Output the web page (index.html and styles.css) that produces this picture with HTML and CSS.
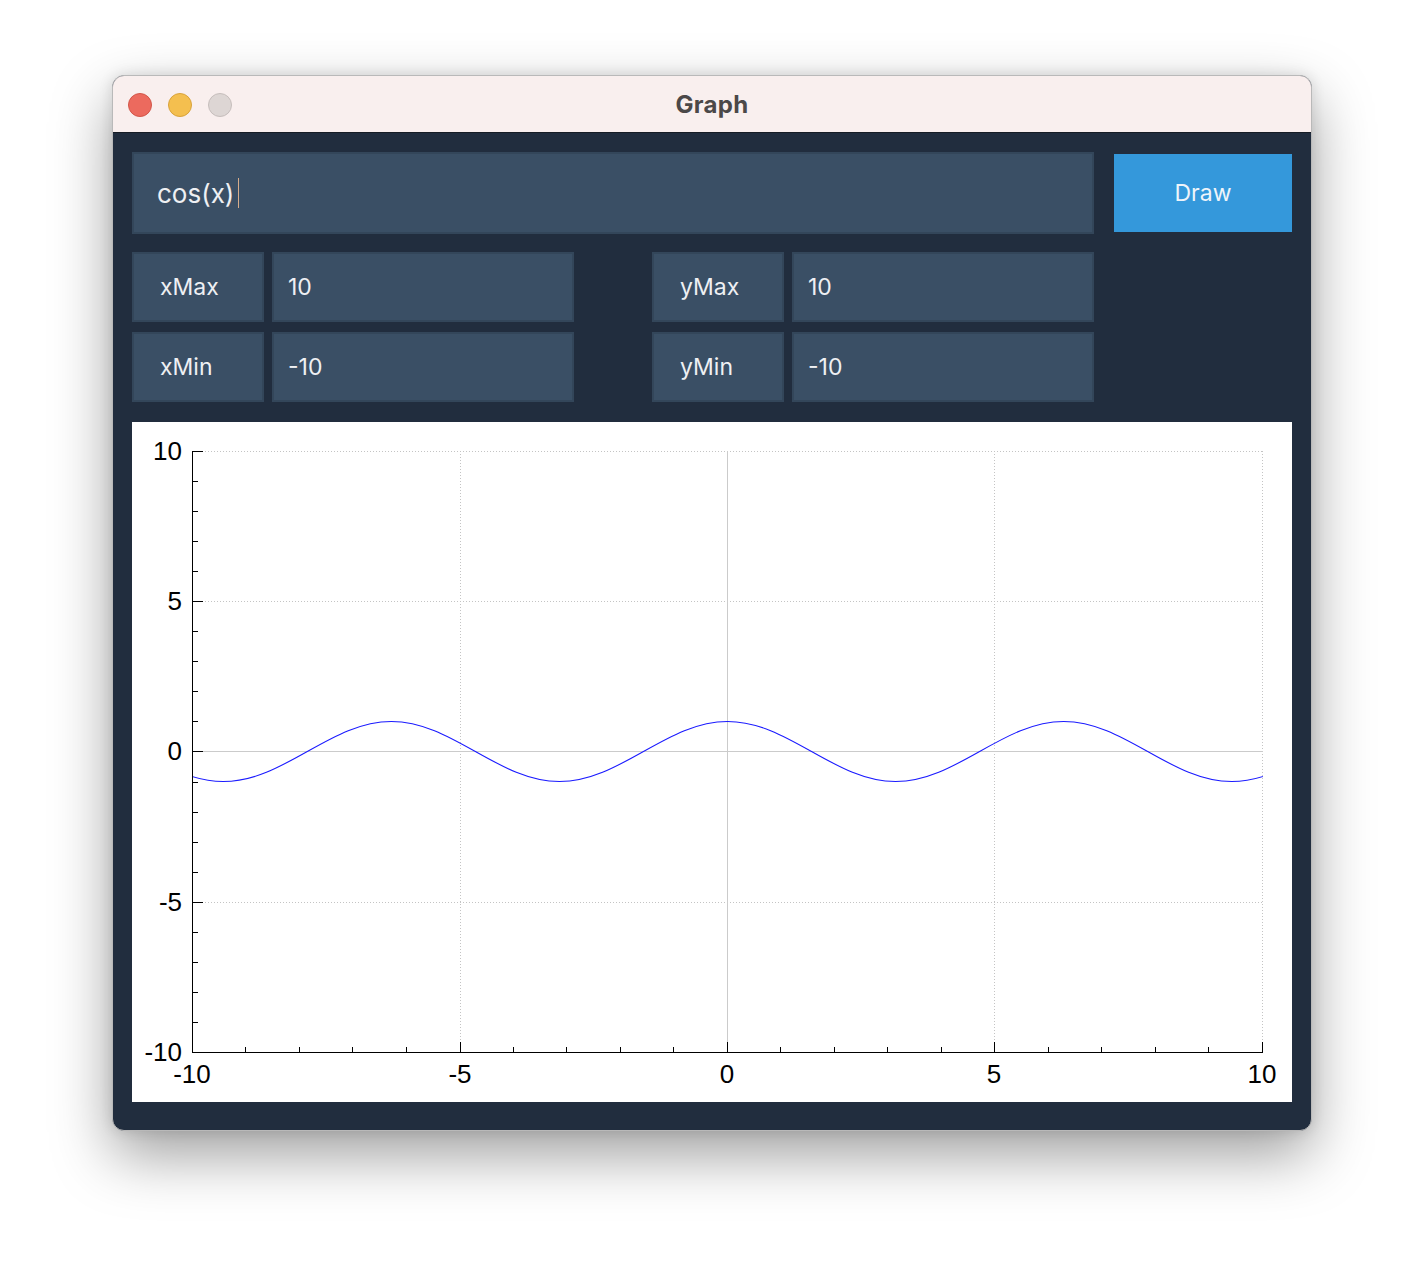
FILE: index.html
```html
<!DOCTYPE html>
<html>
<head>
<meta charset="utf-8">
<title>Graph</title>
<link rel="stylesheet" href="styles.css">
</head>
<body>
<div class="window">
  <div class="titlebar">
    <div class="lights">
      <span class="light red"></span>
      <span class="light yellow"></span>
      <span class="light gray"></span>
    </div>
    <div class="title">Graph</div>
    <div></div>
  </div>
  <div class="content">
    <div class="top-row">
      <div class="expr">cos(x)<span class="caret"></span></div>
      <div class="draw">Draw</div>
    </div>
    <div class="ranges">
      <div class="group">
        <div class="label">xMax</div><div class="value">10</div>
        <div class="label">xMin</div><div class="value">-10</div>
      </div>
      <div class="group">
        <div class="label">yMax</div><div class="value">10</div>
        <div class="label">yMin</div><div class="value">-10</div>
      </div>
    </div>
    <div class="plot">
      <svg class="chart" width="1160" height="680" viewBox="0 0 1160 680">
        <defs>
          <clipPath id="area"><rect x="60" y="0" width="1071" height="680"/></clipPath>
        </defs>
        <g class="grid-dot">
          <line x1="61" y1="29.5" x2="1131" y2="29.5"/>
          <line x1="61" y1="179.5" x2="1131" y2="179.5"/>
          <line x1="61" y1="480.5" x2="1131" y2="480.5"/>
          <line x1="328.5" y1="29" x2="328.5" y2="630"/>
          <line x1="862.5" y1="29" x2="862.5" y2="630"/>
          <line x1="1130.5" y1="29" x2="1130.5" y2="630"/>
        </g>
        <g class="grid-solid">
          <line x1="61" y1="329.5" x2="1131" y2="329.5"/>
          <line x1="595.5" y1="29" x2="595.5" y2="630"/>
        </g>
        <g clip-path="url(#area)">
          <path class="curve" transform="translate(595.5 329.5) scale(53.5 -30.05)"
            d="M -10.9956 0
               C -10.4833 -0.5123, -9.9933 -1, -9.4248 -1
               C -8.8563 -1, -8.3663 -0.5123, -7.8540 0
               C -7.3417 0.5123, -6.8517 1, -6.2832 1
               C -5.7147 1, -5.2247 0.5123, -4.7124 0
               C -4.2001 -0.5123, -3.7101 -1, -3.1416 -1
               C -2.5731 -1, -2.0831 -0.5123, -1.5708 0
               C -1.0585 0.5123, -0.5685 1, 0 1
               C 0.5685 1, 1.0585 0.5123, 1.5708 0
               C 2.0831 -0.5123, 2.5731 -1, 3.1416 -1
               C 3.7101 -1, 4.2001 -0.5123, 4.7124 0
               C 5.2247 0.5123, 5.7147 1, 6.2832 1
               C 6.8517 1, 7.3417 0.5123, 7.8540 0
               C 8.3663 -0.5123, 8.8563 -1, 9.4248 -1
               C 9.9933 -1, 10.4833 -0.5123, 10.9956 0"/>
        </g>
        <g class="axis">
          <path d="M60.5 29 V631 M60 630.5 H1131"/>
          <path d="M60 29.5 H71
                   M60 59.5 H66 M60 89.5 H66 M60 119.5 H66 M60 149.5 H66
                   M60 179.5 H71
                   M60 209.5 H66 M60 239.5 H66 M60 269.5 H66 M60 299.5 H66
                   M60 329.5 H71
                   M60 360.5 H66 M60 390.5 H66 M60 420.5 H66 M60 450.5 H66
                   M60 480.5 H71
                   M60 510.5 H66 M60 540.5 H66 M60 570.5 H66 M60 600.5 H66"/>
          <path d="M113.5 631 V625 M167.5 631 V625 M220.5 631 V625 M274.5 631 V625
                   M328.5 631 V620
                   M381.5 631 V625 M434.5 631 V625 M488.5 631 V625 M541.5 631 V625
                   M595.5 631 V620
                   M648.5 631 V625 M702.5 631 V625 M755.5 631 V625 M809.5 631 V625
                   M862.5 631 V620
                   M916.5 631 V625 M969.5 631 V625 M1023.5 631 V625 M1076.5 631 V625
                   M1130.5 631 V620"/>
        </g>
        <g class="ylabels">
          <text x="50" y="38">10</text>
          <text x="50" y="188">5</text>
          <text x="50" y="338">0</text>
          <text x="50" y="489">-5</text>
          <text x="50" y="639">-10</text>
        </g>
        <g class="xlabels">
          <text x="60" y="661">-10</text>
          <text x="328" y="661">-5</text>
          <text x="595" y="661">0</text>
          <text x="862" y="661">5</text>
          <text x="1130" y="661">10</text>
        </g>
      </svg>
    </div>
  </div>
</div>
</body>
</html>
```

FILE: styles.css
```css
* {
  box-sizing: border-box;
}

html, body {
  margin: 0;
  padding: 0;
  background: #ffffff;
}

body {
  font-family: Inter, "Noto Sans", "Liberation Sans", sans-serif;
  padding: 75px 0 0 112px;
  height: 1280px;
}

.window {
  width: 1200px;
  border: 1px solid #b9b9b9;
  border-radius: 12px;
  overflow: hidden;
  background: #212d3e;
  box-shadow: 0 24px 60px rgba(0, 0, 0, 0.38), 0 0 14px rgba(0, 0, 0, 0.12);
}

.titlebar {
  height: 57px;
  background: #f9efee;
  border-bottom: 1px solid #161c25;
  display: grid;
  grid-template-columns: 1fr auto 1fr;
  align-items: center;
}

.lights {
  display: flex;
  gap: 16px;
  padding-left: 15px;
  padding-top: 1px;
}

.light {
  width: 24px;
  height: 24px;
  border-radius: 50%;
  display: block;
}

.light.red {
  background: #ec6a5e;
  border: 1px solid #d25649;
}

.light.yellow {
  background: #f4bf4f;
  border: 1px solid #d9a33b;
}

.light.gray {
  background: #ddd6d4;
  border: 1px solid #c6bebc;
}

.title {
  font-size: 24px;
  font-weight: 700;
  color: #4b4848;
  letter-spacing: 0.3px;
}

.content {
  padding: 19px 19px 28px 19px;
}

.top-row {
  display: flex;
  align-items: center;
  gap: 20px;
}

.expr {
  width: 962px;
  height: 82px;
  flex: none;
  background: #3a4f65;
  border: 2px solid #33465a;
  display: flex;
  align-items: center;
  padding-left: 23px;
  font-size: 26px;
  color: #eef0f3;
}

.caret {
  display: inline-block;
  width: 1px;
  height: 30px;
  background: #d7ad8b;
  margin-left: 4px;
}

.draw {
  width: 178px;
  height: 78px;
  flex: none;
  background: #3498db;
  color: #eef4fa;
  font-size: 23px;
  display: flex;
  align-items: center;
  justify-content: center;
}

.ranges {
  display: flex;
  gap: 78px;
  margin-top: 18px;
}

.group {
  display: grid;
  grid-template-columns: 132px 302px;
  grid-auto-rows: 70px;
  gap: 10px 8px;
}

.label,
.value {
  background: #3a4f65;
  border: 2px solid #33465a;
  display: flex;
  align-items: center;
  font-size: 23px;
  color: #eef0f3;
}

.label {
  padding-left: 26px;
}

.value {
  padding-left: 14px;
}

.plot {
  margin-top: 20px;
  width: 1160px;
  height: 680px;
  background: #ffffff;
}

.chart {
  display: block;
}

.grid-dot line {
  stroke: #c4c4c4;
  stroke-width: 1;
  stroke-dasharray: 1 2;
}

.grid-solid line {
  stroke: #cbcbcb;
  stroke-width: 1;
}

.curve {
  fill: none;
  stroke: #1a1aff;
  stroke-width: 1.1;
  vector-effect: non-scaling-stroke;
}

.axis path {
  fill: none;
  stroke: #000000;
  stroke-width: 1;
}

.ylabels text,
.xlabels text {
  font-family: "Liberation Sans", Arial, sans-serif;
  font-size: 26px;
  fill: #000000;
}

.ylabels text {
  text-anchor: end;
}

.xlabels text {
  text-anchor: middle;
}
```
